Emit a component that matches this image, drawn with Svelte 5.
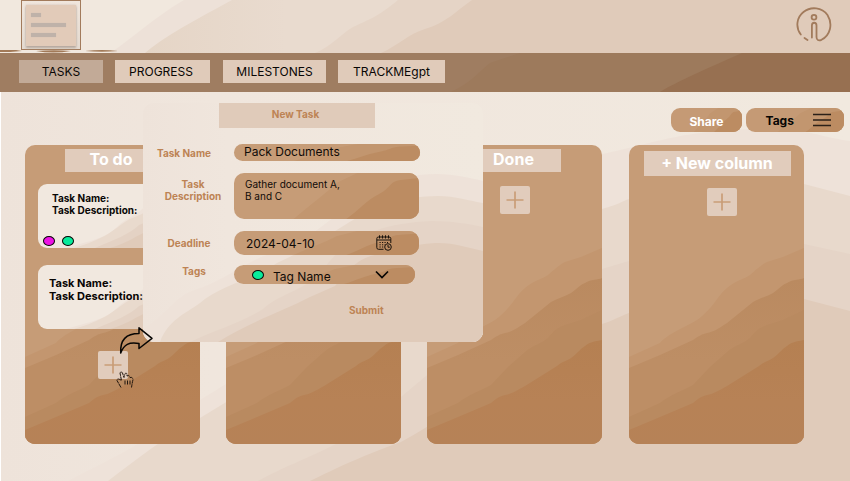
<script>
  const tabs = [
    { name: 'TASKS', width: 84, active: true },
    { name: 'PROGRESS', width: 95 },
    { name: 'MILESTONES', width: 103 },
    { name: 'TRACKMEgpt', width: 107 }
  ];
  const columns = [
    { name: 'To do', kind: 'todo' },
    { name: '', kind: 'covered' },
    { name: 'Done', kind: 'done' },
    { name: '+ New column', kind: 'new' }
  ];
</script>

{#snippet fieldWave()}
  <svg class="wave" viewBox="0 0 186 46" preserveAspectRatio="none" aria-hidden="true">
    <path d="M60 46C75 33 92 21 103 10L124 0H186V46Z" fill="#c2966f" />
    <path d="M113 46C126 37 133 27 146 21C158 15 156 8 168 7L186 5V46Z" fill="#bc8c62" />
  </svg>
{/snippet}

{#snippet plus()}
  <span class="plus"><svg width="30" height="28" viewBox="0 0 30 28"><path d="M6.5 14H23.5M15 5.500V22.500" stroke="#c99d77" stroke-width="1.7" /></svg></span>
{/snippet}

{#snippet cardWave()}
  <svg class="wave" viewBox="0 0 149 64" preserveAspectRatio="none" aria-hidden="true">
    <path d="M28 64C52 57 68 54 79 43S99 32 107 22L149 5V64Z" fill="#eee2d9" />
    <path d="M36 64C66 55 73 48 84 40S98 34 107 28L149 13V64Z" fill="#e9dacd" />
    <path d="M57 64C76 56 92 50 101 41L149 22V64Z" fill="#e4d2c4" />
    <path d="M72 64C90 59 99 51 110 47L149 34V64Z" fill="#e0cbba" />
  </svg>
{/snippet}

<div class="app">
  <header>
    <svg class="wave" viewBox="0 0 850 53" aria-hidden="true">
      <path d="M110 53C132 39 153 18 184 0H850V53Z" fill="#ede1d8" />
      <path d="M145 53C161 39 184 26 232 0H850V53Z" fill="url(#headTan)" />
      <path d="M315 53C332 46 341 34 353 27C373 18 380 15 398 0H850V53Z" fill="#e5d4c6" />
      <path d="M381 53C399 45 408 34 425 29C446 23 456 11 472 0H850V53Z" fill="#e0cbba" />
      <defs><linearGradient id="headTan"><stop stop-color="#e5d5c6" /><stop offset=".2" stop-color="#e9dbcf" /></linearGradient></defs>
    </svg>
    <div class="logo"><div class="paper"><i></i><i></i><i></i></div></div>
    <svg class="strokes" width="120" height="4" viewBox="0 0 120 4" aria-hidden="true"><path d="M0 0H16L22 1L10 2H0ZM36 1Q54-.5 71 1Q53 4 36 1ZM85 1Q102-1 118 1Q102 2.500 85 1Z" fill="#a27a58" /></svg>
    <svg class="info" width="36" height="36" viewBox="0 0 36 36" fill="none" stroke="#a27b5c" stroke-width="1.8" stroke-linecap="round" aria-label="Information">
      <path d="M4.800 27.500C-1 20 1 10 7.500 5C15-1 26 .4 31.500 8C37 17 34.500 28 25.500 32.800C22.500 34 20.500 33 20.500 30V18.500C20.500 14.800 15.900 14.800 15.900 18.500V30.500M8.500 31L11.500 33" />
      <circle cx="18" cy="10.200" r="2.400" />
    </svg>
  </header>

  <nav>
    <svg class="wave" viewBox="0 0 850 39" aria-hidden="true">
      <path d="M450 39C468 32 478 20 490 10L520 0H850V39Z" fill="#9d7a5c" />
      <path d="M660 39C680 27 702 18 742 0H850V39Z" fill="#977051" />
    </svg>
    {#each tabs as tab}
      <button class:active={tab.active} style:width="{tab.width}px">{tab.name}</button>
    {/each}
  </nav>

  <main>
    <svg class="wave" viewBox="1 92 849 389" aria-hidden="true">
      <defs>
        <linearGradient id="ground"><stop stop-color="#eee3da" /><stop offset=".25" stop-color="#f0e6dd" /><stop offset="1" stop-color="#f1e9df" /></linearGradient>
      </defs>
      <path d="M0 92H850V481H0Z" fill="url(#ground)" />
      <path d="M68 481C117 456 148 442 200 400C350 310 510 170 602 154C660 142 680 131 755 129C800 127 825 138 850 141V481Z" fill="#eee2d9" />
      <path d="M108 481C137 459 163 438 200 418C350 325 510 245 602 209C620 204 625 200 629 199C690 165 740 166 804 184L850 196V481Z" fill="#e8d9cc" />
      <path d="M258 481C310 453 345 449 401 397C475 335 540 280 602 269L629 261C690 235 740 231 804 244L850 254V481Z" fill="#e5d4c7" />
      <path d="M310 481C351 461 370 453 401 442C480 400 545 332 602 324C610 322 618 317 629 313C690 287 740 283 804 299L850 311V481Z" fill="#e0cbba" />
    </svg>

    <div class="tools">
      <button class="share">{@render fieldWave()}<b>Share</b></button>
      <button class="filter">{@render fieldWave()}<b>Tags</b>
        <svg width="20" height="14" viewBox="0 0 20 14"><path d="M1 1.500H19M1 7H19M1 12.500H19" stroke="#2b2018" stroke-width="1.5" /></svg>
      </button>
    </div>

    <div class="board">
      {#each columns as column}
        <section class={column.kind}>
          <svg class="wave" viewBox="0 0 175 299" aria-hidden="true">
            <path d="M0 212L31 198C37 190 58 181 68 175C84 164 89 150 98 143C109 134 116 134 121 130C130 122 134 119 138 117L154 112L175 103V299H0Z" fill="#c3966f" />
            <path d="M0 223L31 210L64 195C70 191 73 189 78 188C84 187 89 184 98 178L124 157C131 153 137 152 144 148C152 142 153 140 158 138C164 134 171 135 175 133V299H0Z" fill="url(#dune)" />
            <path d="M0 272L31 258C39 251 55 245 64 240L81 222L98 207C106 200 114 199 121 193C129 183 133 182 138 180L154 175L175 165V299H0Z" fill="#b98a60" />
            <path d="M0 285L31 272L64 258C70 253 73 251 78 250C84 249 89 246 98 241L130 221C136 216 140 216 144 213C152 207 153 204 158 201C164 196 171 196 175 195V299H0Z" fill="url(#deep)" />
            <defs>
              <linearGradient id="dune" x2="0" y2="1"><stop stop-color="#ba8a60" /><stop offset=".5" stop-color="#bd8e65" /></linearGradient>
              <linearGradient id="deep" x2="0" y2="1"><stop stop-color="#b58052" /><stop offset=".6" stop-color="#b78256" /><stop offset="1" stop-color="#b68257" /></linearGradient>
            </defs>
          </svg>
          <h2>{column.name}</h2>
          {#if column.kind === 'todo'}
            <article class="first">{@render cardWave()}<p>Task Name:<br />Task Description:</p>
              <div class="dots"><span class="dot pink"></span><span class="dot"></span></div>
            </article>
            <article class="second">{@render cardWave()}<p>Task Name:<br />Task Description:</p></article>
          {/if}
          {@render plus()}
        </section>
      {/each}
    </div>
  </main>

  <form class="modal" onsubmit={(e) => e.preventDefault()}>
    <svg class="wave" viewBox="143 103 340 239" aria-hidden="true">
      <path d="M143 103H483V342H143Z" fill="url(#ground)" />
      <path d="M143 329C165 316 174 298 192 291C231 278 243 262 275 252C337 232 357 174 436 174C455 174 470 178 483 181V342H143Z" fill="#eee2d9" />
      <path d="M160 342C168 320 185 314 200 303C220 286 257 277 277 263C355 227 365 197 438 196C455 196 470 201 483 203V342Z" fill="#e8d9cc" />
      <path d="M190 342C215 330 243 322 263 309C282 292 303 292 322 271C345 238 380 223 432 221C450 221 470 224 483 227V342Z" fill="#e5d4c7" />
      <path d="M218 342C252 321 285 310 310 297L335 286C347 273 355 259 375 255C400 247 425 243 438 243C455 243 469 248 483 251V342Z" fill="#e0cbba" />
    </svg>
    <h3>New Task</h3>
    <div class="row name"><label for="task">Task Name</label><div class="field" id="task">{@render fieldWave()}<span>Pack Documents</span></div></div>
    <div class="row description"><label for="details">Task<br />Description</label><div class="field" id="details">{@render fieldWave()}<span>Gather document A,<br />B and C</span></div></div>
    <div class="row deadline"><label for="date">Deadline</label>
      <div class="field" id="date">{@render fieldWave()}<span>2024-04-10</span>
        <svg class="calendar" width="16" height="16" viewBox="0 0 16 16" fill="none" stroke="#19120c">
          <path d="M7.500 14.300H2.500Q.8 14.300.8 12.500V3.500Q.8 2 2.500 2H13Q14.800 2 14.800 3.500V8M1 5H14.500M3.500.3V3.500M6.500.3V3.500M9.500.3V3.500M12.500.3V3.500" />
          <path d="M3.500 7.500H12M3.500 9.800H9M3.500 12H8" stroke-dasharray="1.2 1.3" />
          <circle cx="12" cy="12" r="3.300" /><path d="M12 10V12.200H13.800" />
        </svg>
      </div>
    </div>
    <div class="row tag"><label for="tag">Tags</label>
      <div class="field" id="tag">{@render fieldWave()}<i class="dot"></i><span>Tag Name</span>
        <svg class="chevron" width="14" height="9" viewBox="0 0 14 9"><path d="M1 1.500L7 7.500L13 1.500" fill="none" stroke="#080604" stroke-width="1.7" /></svg>
      </div>
    </div>
    <button class="submit">Submit</button>
  </form>

  <svg class="arrow" width="36" height="30" viewBox="0 0 36 30"><path d="M1.700 27C1 14 7 7.500 20 7.500V1.800L33 12.300L20 22.500V17.500C10 16 5 18 1.700 27Z" fill="none" stroke="#080604" stroke-width="1.500" stroke-linejoin="round" /></svg>
  <svg class="hand" width="20" height="20" viewBox="0 0 20 20"><path d="M5 16.500L1 9.500C1 7.500 2.500 7.500 5.500 9.500L4 2Q5-.3 6.500 2L8 6.500C9-.2 11.500 2 11 5Q13.500 3.500 14 6.500Q16.500 5.500 17 8.500Q16 13 15.500 16.500M9 9.500V13.500M11.500 9.500V13.500M14 9.500V13.500" fill="none" stroke="#21160e" stroke-dasharray="4 .6" /></svg>
</div>

<style>
  .app { position: relative; width: 850px; height: 481px; overflow: hidden; font-family: Inter, sans-serif; background: #fff; color: #080604; }
  .app * { box-sizing: border-box; }
  .wave { position: absolute; inset: 0; width: 100%; height: 100%; }
  button { border: 0; padding: 0; font-family: inherit; color: inherit; }
  header { position: relative; height: 53px; background: #f1e8de; padding: 0 18px 0 21px; display: flex; justify-content: space-between; }
  .logo { position: relative; width: 60px; height: 50px; border: 1px solid #a27b5c; background: linear-gradient(#f0e6dd, #e4dad0); padding: 4px; }
  .paper { height: 41px; background: #e2cbb9; box-shadow: 0 2px 2px #b7aaa0, 0 0 2px #cdbfb4; padding: 8px 5px; display: flex; flex-direction: column; gap: 6px; }
  .paper i { height: 4px; width: 10px; background: #bfb2a9; box-shadow: 0 0 1px #c8bbb2; }
  .paper i:nth-child(2) { width: 35px; }
  .paper i:nth-child(3) { width: 25px; }
  .strokes { position: absolute; left: 0; top: 50px; }
  .info { position: relative; margin-top: 7px; }
  nav { position: relative; height: 39px; background: #9f7d61; padding: 7px 19px 0; display: flex; gap: 12px; }
  nav button { position: relative; height: 23px; font-size: 12px; background: #e0cbba; }
  nav button:nth-of-type(2) { padding-right: 3px; }
  nav button:nth-of-type(3) { margin-left: 1px; }
  nav .active { background: #c2aa97; }
  main { position: relative; height: 389px; margin-left: 1px; padding: 16px 6px 0 24px; }
  .tools { position: relative; display: flex; justify-content: flex-end; gap: 4px; height: 24px; }
  .tools button { position: relative; overflow: hidden; background: #c59a75; border-radius: 9px; font-size: 12px; display: flex; align-items: center; }
  .tools b { position: relative; }
  .share { width: 71px; justify-content: center; color: #fff; padding-top: 3px; }
  .filter { width: 98px; padding-left: 19.500px; gap: 18px; }
  .filter > svg:last-child { position: relative; }
  .board { position: relative; margin-top: 13px; display: flex; gap: 26px; }
  section { position: relative; width: 175px; height: 299px; overflow: hidden; border-radius: 10px; background: #c69c77; padding-top: 4px; display: flex; flex-direction: column; align-items: center; }
  section.new { margin-left: 1px; padding: 6px 0 0 1px; }
  h2 { position: relative; margin: 0; width: 96px; height: 23px; line-height: 21px; font-size: 16px; text-align: center; color: #fff; background: #e1ccbc; }
  .todo h2 { margin-left: 1px; padding-right: 4px; }
  .done h2 { margin-right: 3px; padding-left: 1px; }
  .new h2 { width: 147px; height: 25px; line-height: 25px; }
  .plus { position: relative; width: 30px; height: 28px; margin-top: 14px; border-radius: 2px; background: #e1ccbc; }
  .new .plus { margin: 12px 0 0 9px; }
  .todo .plus { margin-top: 22px; }
  .plus svg { display: block; }
  article { position: relative; width: 149px; height: 64px; margin-top: 12px; border-radius: 9px; overflow: hidden; background: #f1e8df; font-weight: 700; }
  article p { position: relative; margin: 0; white-space: nowrap; }
  .first p { padding: 8px 0 0 14px; font-size: 10px; line-height: 12px; }
  .second { margin-top: 17px; }
  .second p { padding: 12px 0 0 11px; font-size: 11px; line-height: 13px; }
  .dots { position: relative; display: flex; gap: 7px; margin: 20px 0 0 5px; }
  .dot { width: 12px; height: 10px; border: 1px solid #080604; border-radius: 50%; background: #08eb9b; }
  .dot.pink { background: #ed12e5; }
  .modal { position: absolute; left: 143px; top: 103px; width: 340px; height: 239px; border-radius: 11px; overflow: hidden; color: #bd8354; font-size: 10px; font-weight: 700; }
  h3 { position: relative; margin: 0 0 0 76px; width: 156px; height: 25px; line-height: 23px; font-size: 10px; padding-right: 3px; text-align: center; background: #e0cbba; }
  .row { position: relative; display: flex; }
  label { width: 91px; text-align: center; line-height: 12px; white-space: nowrap; }
  .field { position: relative; width: 185px; overflow: hidden; display: flex; background: #c69c77; border-radius: 10px; color: #100b07; font-weight: 400; }
  .field span { position: relative; white-space: nowrap; }
  .name { height: 17px; margin-top: 16px; }
  .name label { padding: 3px 9px 0 0; }
  .name .field { width: 186px; padding-left: 10px; font-size: 12px; line-height: 16px; }
  .description { height: 46px; margin-top: 12px; }
  .description label { padding: 5px 0 0 9px; }
  .description .field { padding: 5px 0 0 11px; line-height: 12px; }
  .deadline { height: 24px; margin-top: 12px; }
  .deadline label { padding: 6px 0 0 1px; }
  .deadline .field { padding: 0 27px 0 12px; align-items: center; justify-content: space-between; font-size: 12px; }
  .calendar, .chevron { position: relative; }
  .tag { height: 19px; margin-top: 10px; }
  .tag label { padding: 0 0 0 11px; }
  .tag .field { width: 181px; padding: 0 26px 0 18px; align-items: center; font-size: 12px; }
  .tag .field > .dot { position: relative; margin-right: 9px; }
  .tag .field span { padding-top: 4px; line-height: 15px; }
  .chevron { margin-left: auto; margin-bottom: 1px; }
  .submit { position: relative; margin: 20px 0 0 206px; font-size: 10px; font-weight: 700; background: none; }
  .arrow { position: absolute; left: 119px; top: 326px; }
  .hand { position: absolute; left: 116px; top: 371px; }
</style>
